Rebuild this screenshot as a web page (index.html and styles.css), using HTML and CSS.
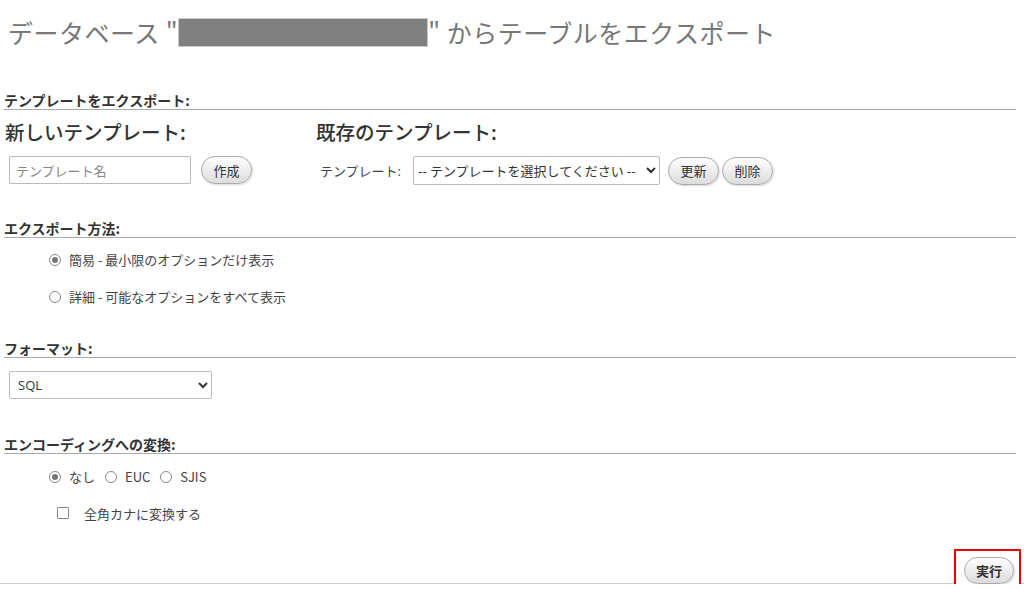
FILE: index.html
```html
<!DOCTYPE html>
<html lang="ja">
<head>
  <meta charset="utf-8">
  <link rel="stylesheet" href="styles.css">
  <title>テーブルをエクスポート</title>
</head>
<body>
  <div class="page">
    <h2 class="title">データベース "<span class="masked"></span>" からテーブルをエクスポート</h2>

    <div class="section templates">
      <h3>テンプレートをエクスポート:</h3>
      <div class="tpl-row">
        <div class="tpl-new">
          <h4>新しいテンプレート:</h4>
          <div class="controls">
            <input type="text" class="tpl-name" placeholder="テンプレート名">
            <button class="btn">作成</button>
          </div>
        </div>
        <div class="tpl-existing">
          <h4>既存のテンプレート:</h4>
          <div class="controls">
            <label class="tpl-label">テンプレート:</label>
            <select class="tpl-select">
              <option>-- テンプレートを選択してください --</option>
            </select>
            <button class="btn">更新</button>
            <button class="btn narrow">削除</button>
          </div>
        </div>
      </div>
    </div>

    <div class="section method">
      <h3>エクスポート方法:</h3>
      <ul class="options">
        <li><span class="radio checked"></span>簡易 - 最小限のオプションだけ表示</li>
        <li><span class="radio"></span>詳細 - 可能なオプションをすべて表示</li>
      </ul>
    </div>

    <div class="section format">
      <h3>フォーマット:</h3>
      <select class="format-select">
        <option>SQL</option>
      </select>
    </div>

    <div class="section encoding">
      <h3>エンコーディングへの変換:</h3>
      <div class="enc-row">
        <span class="radio checked"></span>なし
        <span class="radio"></span>EUC
        <span class="radio"></span>SJIS
      </div>
      <div class="kana-row">
        <span class="check"></span>全角カナに変換する
      </div>
    </div>

    <div class="footer">
      <span class="go-wrap"><button class="btn go">実行</button></span>
    </div>
  </div>
</body>
</html>
```

FILE: styles.css
```css
body {
  margin: 0;
  background-color: white;
  color: #333;
  font-family: "Open Sans", "Noto Sans CJK JP", sans-serif;
  font-size: 13px;
  overflow: hidden;
}

.page {
  padding: 0 8px 0 4px;
}

.title {
  margin: 0;
  padding: 14px 0 0 4px;
  height: 42px;
  font-family: "Noto Sans CJK JP", sans-serif;
  font-size: 25px;
  font-weight: normal;
  color: #777;
  letter-spacing: 0.5px;
  line-height: 36px;
}

.masked {
  display: inline-block;
  width: 248px;
  height: 27px;
  background-color: #808080;
  border: 1px solid #c8c8c8;
  vertical-align: -4px;
}

h3 {
  margin: 0;
  font-family: "Noto Sans CJK JP", sans-serif;
  font-size: 14px;
  font-weight: bold;
  color: #333;
  line-height: 18px;
  border-bottom: 1px solid #aaa;
}

.templates {
  padding-top: 35px;
}

.tpl-row {
  display: flex;
}

.tpl-new {
  width: 311px;
}

h4 {
  margin: 9px 0 0 1px;
  font-family: "Noto Sans CJK JP", sans-serif;
  font-size: 19.5px;
  font-weight: 500;
  color: #333;
  line-height: 26px;
}

.controls {
  display: flex;
  align-items: center;
  margin-top: 11px;
  padding-left: 5px;
}

.tpl-name {
  width: 182px;
  height: 28px;
  box-sizing: border-box;
  border: 1px solid #bbb;
  border-radius: 2px;
  padding: 0 6px;
  font-family: "Noto Sans CJK JP", sans-serif;
  font-size: 13px;
  color: #333;
  margin-right: 10px;
}

.tpl-name::placeholder {
  color: #888;
}

.btn {
  height: 28px;
  min-width: 51px;
  box-sizing: border-box;
  padding: 0 10px;
  border: 1px solid #aaa;
  border-radius: 14px;
  background: linear-gradient(#fefefe, #dcdcdc);
  box-shadow: 1px 1px 2px rgba(0, 0, 0, 0.15);
  font-family: "Noto Sans CJK JP", sans-serif;
  font-size: 13px;
  color: #333;
}

.tpl-label {
  color: #444;
  width: 93px;
}

.tpl-select {
  width: 247px;
  height: 29px;
  border: 1px solid #bbb;
  border-radius: 2px;
  background: white;
  font-family: "Noto Sans CJK JP", sans-serif;
  font-size: 13px;
  color: #333;
  margin-right: 8px;
}

.btn.narrow {
  margin-left: 3px;
}

.method {
  padding-top: 34px;
}

.options {
  list-style: none;
  margin: 0;
  padding: 3px 0 0 45px;
}

.options li {
  height: 37px;
  display: flex;
  align-items: center;
  font-family: "Noto Sans CJK JP", sans-serif;
  color: #444;
}

.radio {
  display: inline-block;
  width: 10px;
  height: 10px;
  border: 1px solid #888;
  border-radius: 50%;
  margin-right: 8px;
  position: relative;
  background: white;
}

.radio.checked::after {
  content: "";
  position: absolute;
  left: 2px;
  top: 2px;
  width: 6px;
  height: 6px;
  border-radius: 50%;
  background: #777;
}

.format {
  padding-top: 24px;
}

.format-select {
  margin: 13px 0 0 5px;
  width: 203px;
  height: 28px;
  border: 1px solid #bbb;
  border-radius: 2px;
  background: white;
  font-family: "Open Sans", sans-serif;
  font-size: 13px;
  color: #333;
  padding-left: 4px;
}

.encoding {
  padding-top: 36px;
}

.enc-row {
  display: flex;
  align-items: center;
  padding: 11px 0 0 45px;
  height: 23px;
  font-family: "Noto Sans CJK JP", sans-serif;
  color: #444;
}

.enc-row .radio:not(:first-child) {
  margin-left: 10px;
}

.kana-row {
  display: flex;
  align-items: center;
  padding: 14px 0 0 53px;
  height: 22px;
  font-family: "Noto Sans CJK JP", sans-serif;
  color: #444;
}

.check {
  display: inline-block;
  width: 10px;
  height: 10px;
  border: 1px solid #888;
  border-radius: 1px;
  margin-right: 15px;
}

.footer {
  margin-top: 26px;
  border-bottom: 1px solid #ccc;
  height: 33px;
  position: relative;
  margin-right: -8px;
  margin-left: -4px;
}

.go-wrap {
  position: absolute;
  right: 3px;
  top: -1px;
  padding: 6px 5px 12px 8px;
  border: 2px solid #e00;
  background: white;
}

.btn.go {
  display: block;
  min-width: 50px;
  height: 27px;
  font-weight: bold;
}
```
